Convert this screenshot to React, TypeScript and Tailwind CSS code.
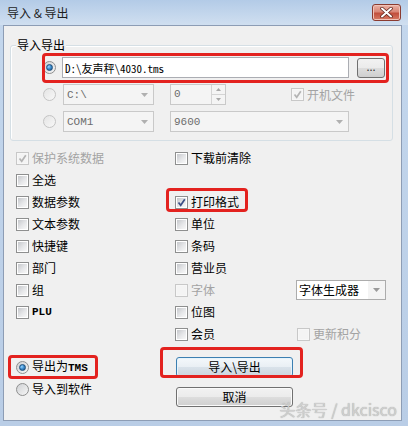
import React from "react";

const RED = "pointer-events-none absolute rounded-[4px] border-[3px] border-[#e3221f]";

function Check({ checked = false, disabled = false }: { checked?: boolean; disabled?: boolean }) {
  return (
    <span
      className={`relative inline-flex h-[13px] w-[13px] shrink-0 items-center justify-center border ${
        disabled ? "border-[#c8c8c8] bg-[#f7f7f7]" : "border-[#8e8f8f] bg-white"
      }`}
    >
      <span
        className={`h-[9px] w-[9px] ${
          disabled ? "bg-[#f4f4f4]" : "bg-[linear-gradient(135deg,#c6c8cc_0%,#e6e7e9_55%,#f8f8f8_100%)]"
        }`}
      />
      {checked && (
        <svg className="absolute left-[0px] top-[0px]" width="11" height="11" viewBox="0 0 11 11">
          <path
            d="M2.5 5.5 L4.7 8.3 L8.8 2.2"
            fill="none"
            stroke={disabled ? "#b4b4b4" : "#3b4f86"}
            strokeWidth="1.7"
          />
        </svg>
      )}
    </span>
  );
}

function Radio({ checked = false, disabled = false }: { checked?: boolean; disabled?: boolean }) {
  return (
    <span
      className={`relative inline-flex h-[13px] w-[13px] shrink-0 items-center justify-center rounded-full border ${
        disabled
          ? "border-[#c4c4c4] bg-[linear-gradient(135deg,#e4e4e4,#f8f8f8)]"
          : "border-[#8e8f8f] bg-[linear-gradient(135deg,#cfd1d4,#f6f6f6)]"
      }`}
    >
      {checked && (
        <span className="h-[7px] w-[7px] rounded-full border border-[#1d4f7c] bg-[radial-gradient(circle_at_35%_35%,#9ad6ff_0%,#3f8fd0_45%,#184f80_100%)]" />
      )}
    </span>
  );
}

function Arrow({ color = "#9a9a9a" }: { color?: string }) {
  return (
    <svg width="7" height="4" viewBox="0 0 7 4">
      <path d="M0 0 H7 L3.5 4 Z" fill={color} />
    </svg>
  );
}

function Combo({
  text,
  w,
  disabled = true,
}: {
  text: string;
  w: string;
  disabled?: boolean;
}) {
  return (
    <div
      className={`flex h-[21px] ${w} items-center justify-between border ${
        disabled ? "border-[#c9c9c9] bg-[#f4f4f4] text-[#6d6d6d]" : "border-[#a9a9a9] bg-white text-black"
      }`}
    >
      <span className="pl-[3px] font-['Liberation_Mono','Noto_Sans_CJK_SC',monospace] text-[11px]">{text}</span>
      <span className="flex h-full w-[17px] items-center justify-center">
        <Arrow color={disabled ? "#b0b0b0" : "#8a8a8a"} />
      </span>
    </div>
  );
}

function CbRow({
  label,
  checked,
  disabled,
  mono,
}: {
  label: string;
  checked?: boolean;
  disabled?: boolean;
  mono?: boolean;
}) {
  return (
    <div className="flex h-[22px] items-center gap-[3px]">
      <Check checked={checked} disabled={disabled} />
      <span
        className={`${disabled ? "text-[#a3a3a3]" : "text-black"} ${
          mono ? "font-['Liberation_Mono','Noto_Sans_CJK_SC',monospace] text-[11px] font-semibold" : ""
        }`}
      >
        {label}
      </span>
    </div>
  );
}

function WinBtn({ children, focused = false }: { children: React.ReactNode; focused?: boolean }) {
  return (
    <div
      className={`flex h-[20px] w-[117px] items-center justify-center rounded-[3px] border ${
        focused
          ? "border-[#3c7fb1] bg-[linear-gradient(#f4f8fb_0%,#e9eff4_50%,#d9e2ea_51%,#cdd6de_100%)] shadow-[inset_0_0_0_1px_#e6f4fc]"
          : "border-[#707070] bg-[linear-gradient(#f2f2f2_0%,#ebebeb_50%,#dddddd_51%,#cfcfcf_100%)] shadow-[inset_0_0_0_1px_#fafafa]"
      }`}
    >
      {children}
    </div>
  );
}

export default function App() {
  return (
    <div className="relative flex h-[426px] w-[408px] flex-col overflow-hidden bg-[linear-gradient(#c4d7ed,#b9cde6)] font-['Noto_Sans_CJK_SC',sans-serif] text-[12px] leading-[14px] text-black">
      {/* title bar */}
      <div className="flex h-[25px] shrink-0 items-center justify-between bg-[linear-gradient(#b3cbe7,#d0dff0)] pl-[7px] pr-[7px]">
        <span className="text-[12px] text-[#1e1e1e]">导入 &amp; 导出</span>
        <div className="flex h-[17px] w-[29px] items-center justify-center rounded-[3px] border border-[#8b3b30] bg-[linear-gradient(#eab1a5_0%,#d98777_45%,#c14f3d_55%,#d77a63_100%)] shadow-[inset_0_0_0_1px_#f0c3b8]">
          <svg width="13" height="11" viewBox="0 0 13 11">
            <path d="M2 1.5 L11 9.5 M11 1.5 L2 9.5" stroke="#5a2018" strokeWidth="3.4" strokeLinecap="round" />
            <path d="M2 1.5 L11 9.5 M11 1.5 L2 9.5" stroke="#ffffff" strokeWidth="2" strokeLinecap="round" />
          </svg>
        </div>
      </div>

      <div className="flex flex-1 pb-[5px] pl-[3px] pr-[6px]">
        <div className="relative flex flex-1 flex-col border border-[#8d9db5] bg-[#f0f0f0]">
          {/* group box */}
          <div className="relative ml-[6px] mt-[19px] w-[383px] rounded-[3px] border border-[#d5dfe5] pb-[8px] pt-[11px] shadow-[inset_1px_1px_0_#ffffff]">
            <span className="absolute left-[5px] top-[-8px] bg-[#f0f0f0] px-[1px] leading-[14px]">导入导出</span>
            <div className="flex flex-col gap-[6px]">
              {/* row 1 */}
              <div className="relative flex h-[21px] items-center pl-[32px]">
                <Radio checked />
                <div className="ml-[6px] flex h-[21px] w-[287px] items-center border border-[#abadb3] bg-white pl-[2px]">
                  <span className="font-['Noto_Sans_Mono_CJK_SC','Liberation_Mono','Noto_Sans_CJK_SC',monospace] text-[11px]">
                    D:\友声秤\4030.tms
                  </span>
                </div>
                <div className="ml-[8px] flex h-[20px] w-[28px] items-center justify-center rounded-[3px] border border-[#707070] bg-[linear-gradient(#f2f2f2_0%,#ebebeb_50%,#dddddd_51%,#cfcfcf_100%)] pb-[3px] text-[11px] text-[#333]">
                  ...
                </div>
                <div className={`${RED} left-[31px] top-[-4px] h-[30px] w-[347px]`} />
              </div>
              {/* row 2 */}
              <div className="flex h-[21px] items-center pl-[32px]">
                <Radio disabled />
                <div className="ml-[7px]">
                  <Combo text="C:\" w="w-[91px]" />
                </div>
                <div className="ml-[16px] flex h-[21px] w-[56px] border border-[#c9c9c9] bg-[#f4f4f4]">
                  <span className="flex-1 pl-[3px] pt-[2px] font-['Liberation_Mono',monospace] text-[11px] text-[#6d6d6d]">0</span>
                  <div className="flex w-[14px] flex-col border-l border-[#d4d4d4]">
                    <div className="flex flex-1 items-center justify-center border-b border-[#d4d4d4]">
                      <svg width="5" height="3" viewBox="0 0 5 3">
                        <path d="M0 3 H5 L2.5 0 Z" fill="#a8a8a8" />
                      </svg>
                    </div>
                    <div className="flex flex-1 items-center justify-center">
                      <svg width="5" height="3" viewBox="0 0 5 3">
                        <path d="M0 0 H5 L2.5 3 Z" fill="#a8a8a8" />
                      </svg>
                    </div>
                  </div>
                </div>
                <div className="ml-[65px] flex items-center gap-[3px]">
                  <Check checked disabled />
                  <span className="text-[#a3a3a3]">开机文件</span>
                </div>
              </div>
              {/* row 3 */}
              <div className="flex h-[21px] items-center pl-[32px]">
                <Radio disabled />
                <div className="ml-[7px]">
                  <Combo text="COM1" w="w-[91px]" />
                </div>
                <div className="ml-[16px]">
                  <Combo text="9600" w="w-[179px]" />
                </div>
              </div>
            </div>
          </div>

          {/* checkbox grid */}
          <div className="ml-[12px] mt-[6px] grid grid-cols-[159px_121px_1fr]">
            <CbRow label="保护系统数据" checked disabled />
            <CbRow label="下载前清除" />
            <div />

            <CbRow label="全选" />
            <div />
            <div />

            <CbRow label="数据参数" />
            <div className="relative">
              <CbRow label="打印格式" checked />
              <div className={`${RED} left-[-9px] top-[-3px] h-[24px] w-[82px]`} />
            </div>
            <div />

            <CbRow label="文本参数" />
            <CbRow label="单位" />
            <div />

            <CbRow label="快捷键" />
            <CbRow label="条码" />
            <div />

            <CbRow label="部门" />
            <CbRow label="营业员" />
            <div />

            <CbRow label="组" />
            <CbRow label="字体" disabled />
            <div className="flex h-[22px] items-center">
              <div className="flex h-[20px] w-[90px] items-center justify-between border border-[#acacac] bg-white">
                <span className="pl-[2px] text-black">字体生成器</span>
                <span className="flex h-full w-[17px] items-center justify-center bg-[#f4f4f4]">
                  <Arrow color="#9a9a9a" />
                </span>
              </div>
            </div>

            <CbRow label="PLU" mono />
            <CbRow label="位图" />
            <div />

            <div />
            <CbRow label="会员" />
            <div className="ml-[1px]">
              <CbRow label="更新积分" disabled />
            </div>
          </div>

          {/* bottom section */}
          <div className="ml-[12px] flex">
            <div className="mt-[11px] flex w-[160px] flex-col">
              <div className="relative flex h-[22px] items-center gap-[3px]">
                <Radio checked />
                <span>
                  导出为<span className="font-['Liberation_Mono',monospace] text-[11px] font-semibold">TMS</span>
                </span>
                <div className={`${RED} left-[-8px] top-[-1px] h-[24px] w-[90px]`} />
              </div>
              <div className="flex h-[22px] items-center gap-[3px]">
                <Radio />
                <span>导入到软件</span>
              </div>
            </div>
            <div className="mt-[12px] flex flex-col gap-[10px]">
              <div className="relative">
                <WinBtn focused>导入\导出</WinBtn>
                <div className={`${RED} left-[-16px] top-[-10px] h-[31px] w-[143px]`} />
              </div>
              <WinBtn>取消</WinBtn>
            </div>
          </div>

          {/* watermark */}
          <span className="pointer-events-none absolute bottom-[2px] right-[4px] text-[16px] leading-[18px] text-[#cfcfcf] [text-shadow:0_0_1px_#a0a0a0]">
            头条号 / dkcisco
          </span>
        </div>
      </div>
    </div>
  );
}
